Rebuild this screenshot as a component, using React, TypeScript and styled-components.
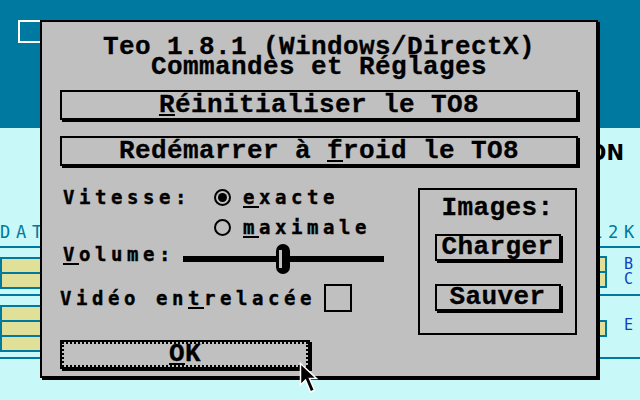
import React from 'react';
import styled, { createGlobalStyle } from 'styled-components';

const TEAL = '#0079a0';
const CYAN = '#c8f8f8';
const YELLOW = '#e0e098';
const GREY = '#c0c0c0';
const BLUE = '#1040c0';

const GlobalStyle = createGlobalStyle`
  html, body {
    margin: 0;
    padding: 0;
    background: ${CYAN};
  }
  body {
    width: 640px;
    height: 400px;
    overflow: hidden;
  }
`;

const App = () => {
    return (
        <Screen>
            <GlobalStyle />
            <TopBand>
                <WindowIcon />
            </TopBand>
            <Desktop>
                <HeadRow>ON</HeadRow>
                <LabelRow>
                    <span>DATE</span>
                    <span>512K</span>
                </LabelRow>
                <Rule />
                <GroupRow $h={46}>
                    <FieldBox $w={90} $top={9}>
                        <Cell />
                        <Cell />
                    </FieldBox>
                    <Spacer />
                    <FieldBox $w={50} $top={8}>
                        <Cell />
                        <Cell />
                    </FieldBox>
                    <Tags $top={10}>
                        <Tag>B</Tag>
                        <Tag>C</Tag>
                    </Tags>
                </GroupRow>
                <Rule />
                <GroupRow $h={61}>
                    <FieldBox $w={90} $top={9}>
                        <Cell />
                        <Cell />
                        <Cell />
                    </FieldBox>
                    <Spacer />
                    <FieldBox $w={50} $top={24}>
                        <Cell />
                    </FieldBox>
                    <Tags $top={23}>
                        <Tag>E</Tag>
                    </Tags>
                </GroupRow>
                <Rule />
            </Desktop>

            <Dialog>
                <Title>
                    <div>Teo 1.8.1 (Windows/DirectX)</div>
                    <div>Commandes et Réglages</div>
                </Title>
                <PushButton $h={30} $top={13}>
                    <Key>R</Key>éinitialiser le TO8
                </PushButton>
                <PushButton $h={30} $top={16}>
                    Redémarrer à <Key>f</Key>roid le TO8
                </PushButton>

                <Middle>
                    <LeftCol>
                        <OptionRow>
                            <Label>Vitesse:</Label>
                            <Radio $checked />
                            <Label><Key>e</Key>xacte</Label>
                        </OptionRow>
                        <OptionRow>
                            <span />
                            <Radio />
                            <Label><Key>m</Key>aximale</Label>
                        </OptionRow>
                        <VolumeRow>
                            <VolumeLabel><Key>V</Key>olume:</VolumeLabel>
                            <Track>
                                <Thumb />
                            </Track>
                        </VolumeRow>
                        <VideoRow>
                            <Label>Vidéo en<Key>t</Key>relacée</Label>
                            <CheckBox />
                        </VideoRow>
                    </LeftCol>
                    <GroupBox>
                        <GroupTitle>Images:</GroupTitle>
                        <PushButton $h={27} $w={126} $top={16}>Charger</PushButton>
                        <PushButton $h={27} $w={126} $top={23}>Sauver</PushButton>
                    </GroupBox>
                </Middle>

                <OkButton $h={29} $w={250} $top={5}>
                    <Key>O</Key>K
                </OkButton>
            </Dialog>

            <Cursor width="22" height="34" viewBox="0 0 22 34">
                <path
                    d="M1.5 1.5 L1.5 23 L6.5 18 L11.5 30 L15.5 28.3 L10.5 16.5 L17.5 16.5 Z"
                    fill="#000"
                    stroke="#fff"
                    strokeWidth="1.5"
                    strokeLinejoin="miter"
                />
            </Cursor>
        </Screen>
    );
};

export default App;

const titleFont = `
  font-family: 'Liberation Mono', 'DejaVu Sans Mono', monospace;
  font-weight: bold;
  font-size: 26px;
  letter-spacing: 0.4px;
  -webkit-text-stroke: 0.3px #000;
`;

const labelFont = `
  font-family: 'DejaVu Sans Mono', 'Liberation Mono', monospace;
  font-weight: bold;
  font-size: 19px;
  letter-spacing: 4.56px;
  line-height: 20px;
  -webkit-text-stroke: 0.4px #000;
`;

const Screen = styled.div`
  position: relative;
  width: 640px;
  height: 400px;
  overflow: hidden;
  display: flex;
  flex-direction: column;
  background: ${CYAN};
`;

const TopBand = styled.div`
  height: 128px;
  flex-shrink: 0;
  background: ${TEAL};
  display: flex;
  align-items: flex-start;
`;

const WindowIcon = styled.div`
  margin: 20px 0 0 18px;
  width: 24px;
  height: 23px;
  box-sizing: border-box;
  border: 2px solid #fff;
`;

const Desktop = styled.div`
  display: flex;
  flex-direction: column;
`;

const HeadRow = styled.div`
  height: 90px;
  box-sizing: border-box;
  padding: 13px 16px 0 0;
  text-align: right;
  font-family: 'DejaVu Sans', 'Liberation Sans', sans-serif;
  font-weight: bold;
  font-size: 21px;
  line-height: 24px;
  color: #000;
`;

const LabelRow = styled.div`
  height: 28px;
  box-sizing: border-box;
  padding-top: 4px;
  display: flex;
  justify-content: space-between;
  font-family: 'DejaVu Sans Mono', monospace;
  font-size: 17px;
  letter-spacing: 5.77px;
  line-height: 20px;
  color: ${TEAL};
`;

const Rule = styled.div`
  height: 2px;
  background: ${TEAL};
`;

const GroupRow = styled.div<{ $h: number }>`
  height: ${p => p.$h}px;
  display: flex;
  align-items: flex-start;
`;

const Spacer = styled.div`
  flex: 1;
`;

const FieldBox = styled.div<{ $w: number; $top: number }>`
  width: ${p => p.$w}px;
  margin-top: ${p => p.$top}px;
  box-sizing: border-box;
  border: 2px solid ${TEAL};
  background: ${TEAL};
  display: flex;
  flex-direction: column;
  gap: 2px;
`;

const Cell = styled.div`
  height: 13px;
  background: ${YELLOW};
`;

const Tags = styled.div<{ $top: number }>`
  width: 33px;
  box-sizing: border-box;
  padding-left: 17px;
  margin-top: ${p => p.$top}px;
  display: flex;
  flex-direction: column;
  gap: 3px;
`;

const Tag = styled.div`
  font-family: 'DejaVu Sans Mono', monospace;
  font-size: 15px;
  line-height: 12px;
  color: ${BLUE};
`;

const Dialog = styled.div`
  position: absolute;
  left: 40px;
  top: 20px;
  width: 558px;
  height: 358px;
  box-sizing: border-box;
  border: 2px solid #000;
  box-shadow: 2px 2px 0 #000;
  background: ${GREY};
  padding: 15px 18px 0;
  display: flex;
  flex-direction: column;
  color: #000;
`;

const Title = styled.div`
  ${titleFont}
  line-height: 20px;
  text-align: center;
`;

const Key = styled.span`
  text-decoration: underline;
  text-decoration-thickness: 2px;
  text-underline-offset: 2px;
`;

const PushButton = styled.button<{ $h: number; $w?: number; $top: number }>`
  ${titleFont}
  flex-shrink: 0;
  height: ${p => p.$h}px;
  width: ${p => (p.$w ? `${p.$w}px` : 'auto')};
  margin: ${p => p.$top}px 0 0;
  padding: 0;
  box-sizing: border-box;
  border: 2px solid #000;
  box-shadow: 2px 2px 0 #000;
  border-radius: 0;
  background: ${GREY};
  color: #000;
  line-height: ${p => p.$h - 4}px;
  text-align: center;
  white-space: pre;
`;

const OkButton = styled(PushButton)`
  position: relative;
  align-self: flex-start;

  &::after {
    content: '';
    position: absolute;
    inset: 0;
    border: 2px dotted #000;
  }
`;

const Middle = styled.div`
  display: flex;
  margin-top: 16px;
`;

const LeftCol = styled.div`
  flex: 1;
  display: flex;
  flex-direction: column;
`;

const Label = styled.span`
  ${labelFont}
  white-space: pre;
`;

const OptionRow = styled.div`
  height: 30px;
  margin-left: 3px;
  display: grid;
  grid-template-columns: 151px 29px auto;
  align-items: center;
`;

const Radio = styled.div<{ $checked?: boolean }>`
  position: relative;
  width: 17px;
  height: 17px;
  box-sizing: border-box;
  border: 2px solid #000;
  border-radius: 50%;

  &::after {
    content: '';
    display: ${p => (p.$checked ? 'block' : 'none')};
    position: absolute;
    inset: 2px;
    border-radius: 50%;
    background: #000;
  }
`;

const VolumeRow = styled.div`
  height: 34px;
  margin-left: 3px;
  display: flex;
  align-items: center;
`;

const VolumeLabel = styled(Label)`
  width: 120px;
  align-self: flex-start;
  margin-top: 2px;
`;

const Track = styled.div`
  position: relative;
  width: 201px;
  height: 6px;
  background: #000;
`;

const Thumb = styled.div`
  position: absolute;
  left: 93px;
  top: -12px;
  width: 14px;
  height: 30px;
  box-sizing: border-box;
  border: 2px solid #000;
  border-radius: 7px;
  background: #000;

  &::before {
    content: '';
    position: absolute;
    left: 1px;
    top: 4px;
    bottom: 4px;
    width: 3px;
    background: ${GREY};
  }
`;

const VideoRow = styled.div`
  height: 36px;
  margin-top: 4px;
  display: flex;
  align-items: center;
  gap: 8px;
`;

const CheckBox = styled.div`
  width: 28px;
  height: 28px;
  box-sizing: border-box;
  border: 2px solid #000;
`;

const GroupBox = styled.div`
  width: 159px;
  height: 147px;
  margin: 6px 1px 0 0;
  box-sizing: border-box;
  border: 2px solid #000;
  padding-top: 8px;
  display: flex;
  flex-direction: column;
  align-items: center;
`;

const GroupTitle = styled.div`
  ${titleFont}
  line-height: 20px;
`;

const Cursor = styled.svg`
  position: absolute;
  left: 299px;
  top: 362px;
`;
